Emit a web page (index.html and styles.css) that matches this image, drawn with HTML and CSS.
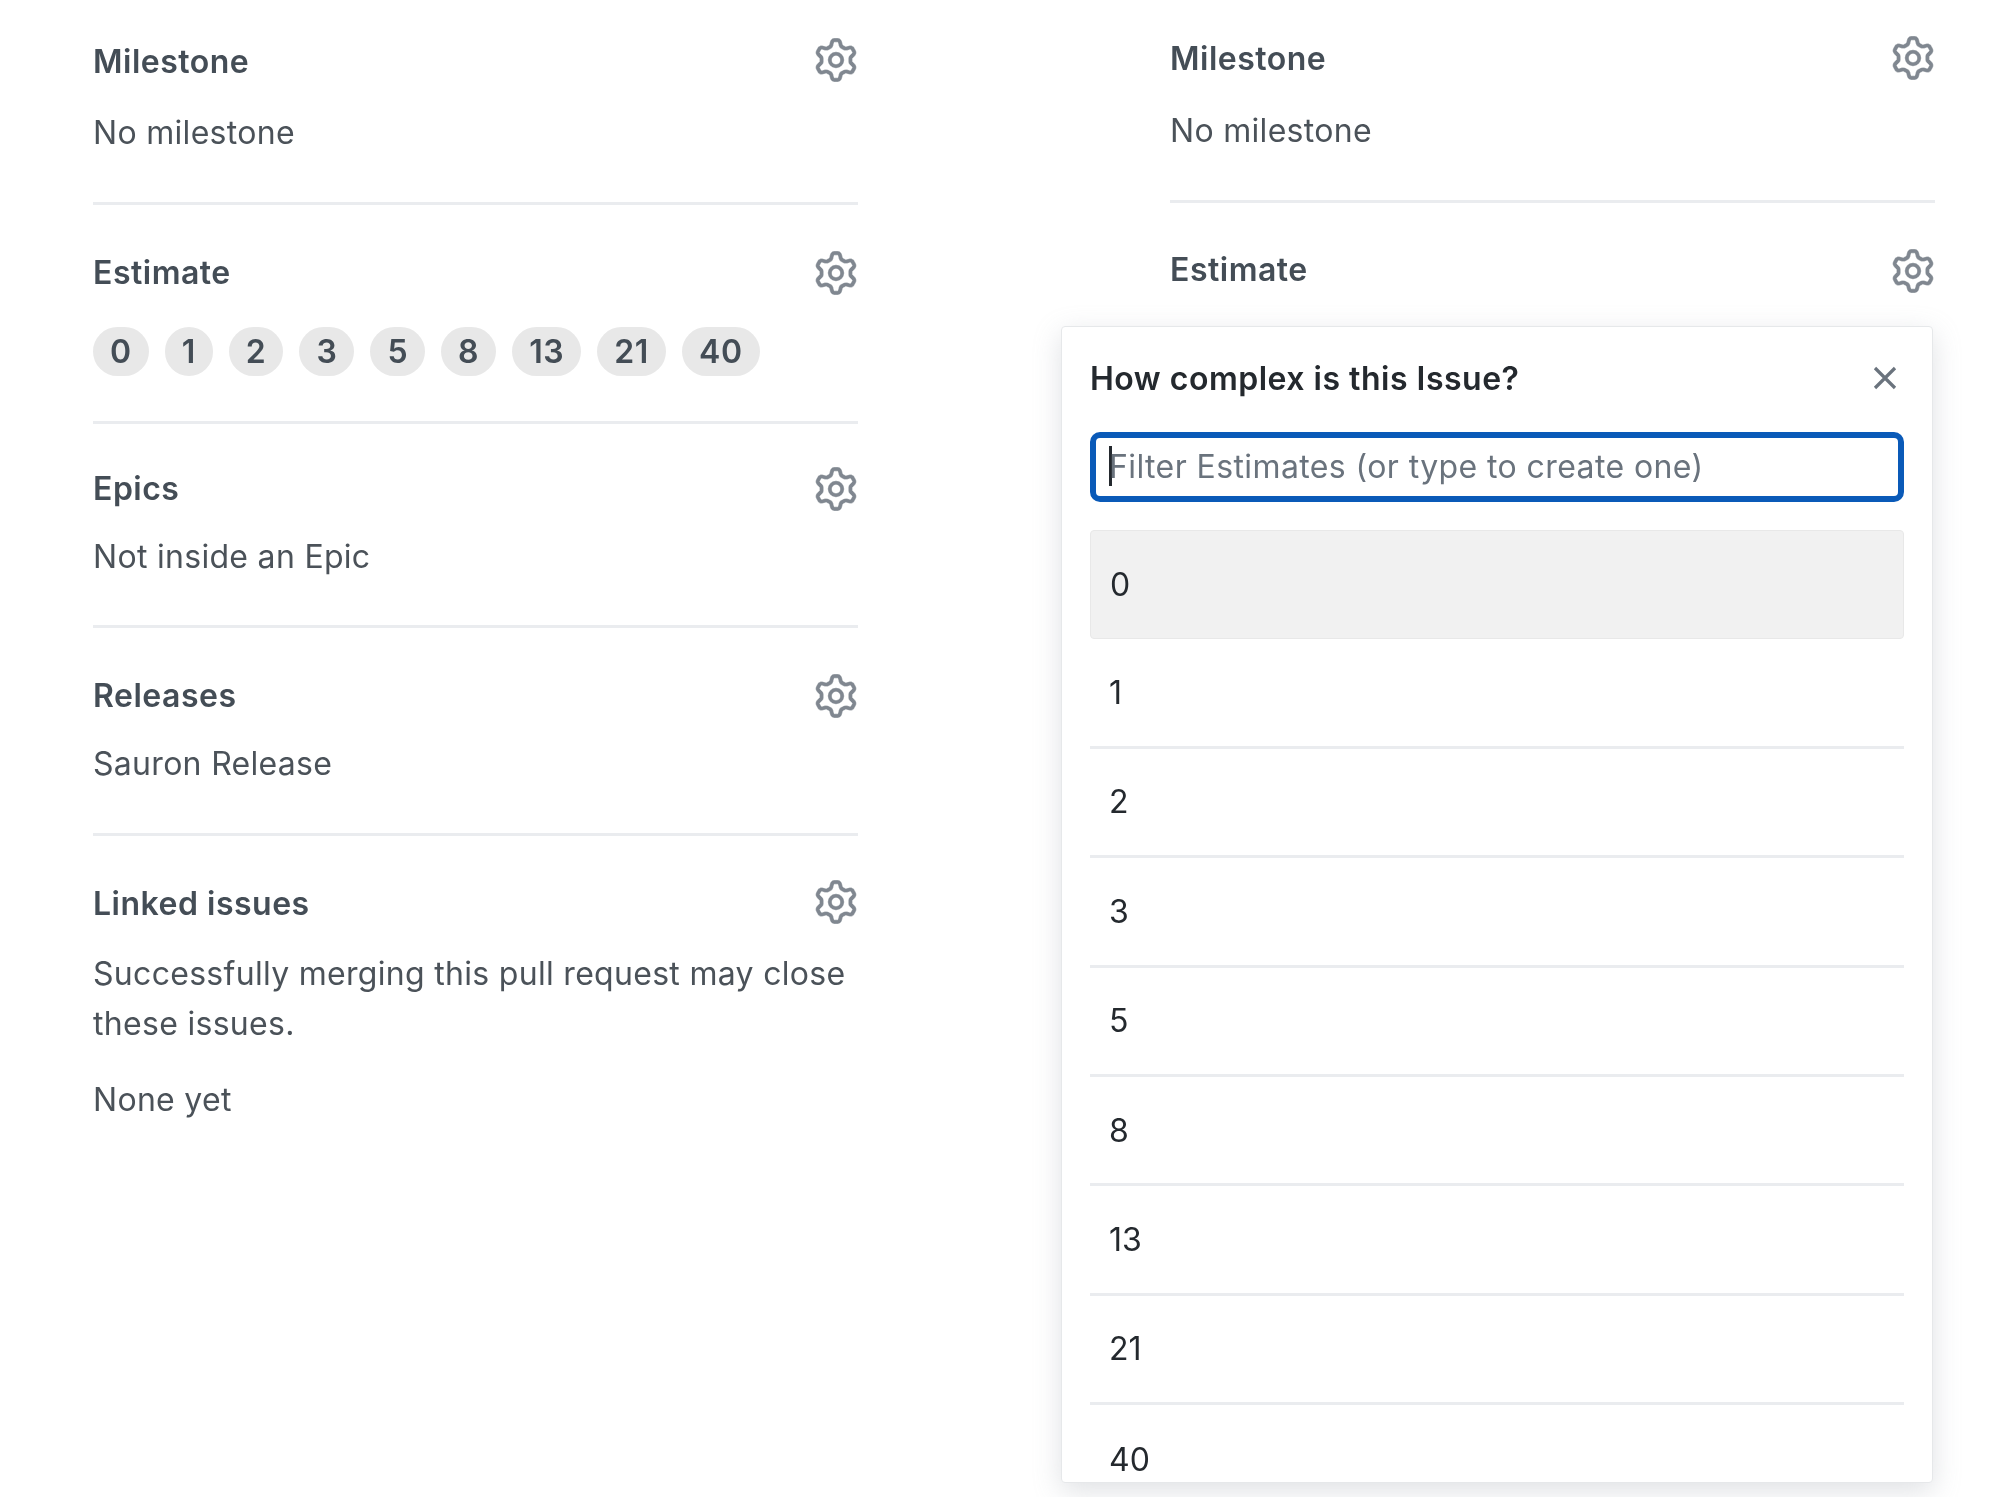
FILE: index.html
```html
<!DOCTYPE html>
<html lang="en">
<head>
<meta charset="utf-8">
<title>Sidebar</title>
<link rel="stylesheet" href="styles.css">
</head>
<body>
<svg class="defs" width="0" height="0" aria-hidden="true">
  <symbol id="gear" viewBox="0 0 16 16"><path d="M8 0a8.2 8.2 0 0 1 .701.031C9.444.095 9.99.645 10.16 1.29l.288 1.107c.018.066.079.158.212.224.231.114.454.243.668.386.123.082.233.09.299.071l1.103-.303c.644-.176 1.392.021 1.82.63.27.385.506.792.704 1.218.315.675.111 1.422-.364 1.891l-.814.806c-.049.048-.098.147-.088.294.016.257.016.515 0 .772-.01.147.038.246.088.294l.814.806c.475.469.679 1.216.364 1.891a7.977 7.977 0 0 1-.704 1.217c-.428.61-1.176.807-1.82.63l-1.102-.302c-.067-.019-.177-.011-.3.071a5.909 5.909 0 0 1-.668.386c-.133.066-.194.158-.211.224l-.29 1.106c-.168.646-.715 1.196-1.458 1.26a8.006 8.006 0 0 1-1.402 0c-.743-.064-1.289-.614-1.458-1.26l-.289-1.106c-.018-.066-.079-.158-.212-.224a5.738 5.738 0 0 1-.668-.386c-.123-.082-.233-.09-.299-.071l-1.103.303c-.644.176-1.392-.021-1.82-.63a8.12 8.12 0 0 1-.704-1.218c-.315-.675-.111-1.422.363-1.891l.815-.806c.05-.048.098-.147.088-.294a6.214 6.214 0 0 1 0-.772c.01-.147-.038-.246-.088-.294l-.815-.806C.635 6.045.431 5.298.746 4.623a7.92 7.92 0 0 1 .704-1.217c.428-.61 1.176-.807 1.82-.63l1.102.302c.067.019.177.011.3-.071.214-.143.437-.272.668-.386.133-.066.194-.158.211-.224l.29-1.106C6.009.645 6.556.095 7.299.03 7.53.01 7.764 0 8 0Zm-.571 1.525c-.036.003-.108.036-.137.146l-.289 1.105c-.147.561-.549.967-.998 1.189-.173.086-.34.183-.5.29-.417.278-.97.423-1.529.27l-1.103-.303c-.109-.03-.175.016-.195.045-.22.312-.412.644-.573.99-.014.031-.021.11.059.19l.815.806c.411.406.562.957.53 1.456a4.709 4.709 0 0 0 0 .582c.032.499-.119 1.05-.53 1.456l-.815.806c-.081.08-.073.159-.059.19.162.346.353.677.573.989.02.03.085.076.195.046l1.102-.303c.56-.153 1.113-.008 1.53.27.161.107.328.204.501.29.447.222.85.629.997 1.189l.289 1.105c.029.109.101.143.137.146a6.6 6.6 0 0 0 1.142 0c.036-.003.108-.036.137-.146l.289-1.105c.147-.561.549-.967.998-1.189.173-.086.34-.183.5-.29.417-.278.97-.423 1.529-.27l1.103.303c.109.029.175-.016.195-.045.22-.313.411-.644.573-.99.014-.031.021-.11-.059-.19l-.815-.806c-.411-.406-.562-.957-.53-1.456a4.709 4.709 0 0 0 0-.582c-.032-.499.119-1.05.53-1.456l.815-.806c.081-.08.073-.159.059-.19a6.464 6.464 0 0 0-.573-.989c-.02-.03-.085-.076-.195-.046l-1.102.303c-.56.153-1.113.008-1.53-.27a4.44 4.44 0 0 0-.501-.29c-.447-.222-.85-.629-.997-1.189l-.289-1.105c-.029-.11-.101-.143-.137-.146a6.6 6.6 0 0 0-1.142 0ZM11 8a3 3 0 1 1-6 0 3 3 0 0 1 6 0ZM9.5 8a1.5 1.5 0 1 0-3.001.001A1.5 1.5 0 0 0 9.5 8Z"/></symbol>
</svg>
<main class="page">
  <aside class="sidebar">
    <section class="section s-milestone">
      <header class="head"><h3>Milestone</h3><svg class="gear"><use href="#gear"/></svg></header>
      <p class="value">No milestone</p>
    </section>
    <section class="section s-estimate">
      <header class="head"><h3>Estimate</h3><svg class="gear"><use href="#gear"/></svg></header>
      <div class="pills">
        <span class="pill">0</span><span class="pill">1</span><span class="pill">2</span><span class="pill">3</span><span class="pill">5</span><span class="pill">8</span><span class="pill">13</span><span class="pill">21</span><span class="pill">40</span>
      </div>
    </section>
    <section class="section s-epics">
      <header class="head"><h3>Epics</h3><svg class="gear"><use href="#gear"/></svg></header>
      <p class="value">Not inside an Epic</p>
    </section>
    <section class="section s-releases">
      <header class="head"><h3>Releases</h3><svg class="gear"><use href="#gear"/></svg></header>
      <p class="value">Sauron Release</p>
    </section>
    <section class="section s-linked">
      <header class="head"><h3>Linked issues</h3><svg class="gear"><use href="#gear"/></svg></header>
      <p class="value">Successfully merging this pull request may close these issues.</p>
      <p class="value none">None yet</p>
    </section>
  </aside>
  <aside class="sidebar sidebar-right">
    <section class="section s-milestone">
      <header class="head"><h3>Milestone</h3><svg class="gear"><use href="#gear"/></svg></header>
      <p class="value">No milestone</p>
    </section>
    <section class="section s-estimate no-rule">
      <header class="head"><h3>Estimate</h3><svg class="gear"><use href="#gear"/></svg></header>
    </section>
  </aside>
  <div class="popover">
    <header class="pop-head">
      <h2>How complex is this Issue?</h2>
      <svg class="close" viewBox="0 0 24 24"><path d="M4 4 20 20M20 4 4 20"/></svg>
    </header>
    <div class="filter"><span class="caret"></span><span class="placeholder">Filter Estimates (or type to create one)</span></div>
    <ul class="options">
      <li class="option active">0</li>
      <li class="option">1</li>
      <li class="option">2</li>
      <li class="option">3</li>
      <li class="option">5</li>
      <li class="option">8</li>
      <li class="option">13</li>
      <li class="option">21</li>
      <li class="option">40</li>
    </ul>
  </div>
</main>
</body>
</html>
```
FILE: styles.css
```css
* { box-sizing: border-box; }
html, body { margin: 0; height: 100%; background: #fff; overflow: hidden; }
body { font-family: Inter, "Liberation Sans", sans-serif; color: #444d56; }
.defs { position: absolute; }
.page { position: relative; display: flex; height: 1497px; padding-left: 93px; filter: blur(.5px); }
.sidebar { width: 765px; flex: none; }
.sidebar-right { margin-left: 312px; margin-top: -2.5px; }
.section { border-bottom: 3px solid #eaecef; padding-bottom: 44px; }
.no-rule { border-bottom: 0; }
.head { display: flex; align-items: center; justify-content: space-between; height: 44px; }
h3 { margin: 0; font-size: 32px; font-weight: 600; letter-spacing: .5px; }
.gear { width: 44px; height: 44px; fill: #6a737d; stroke: #fff; stroke-width: .12; opacity: .85; margin-top: 2px; }
.s-milestone .gear, .s-linked .gear { margin-top: -2px; }
.value { margin: 0; font-size: 32px; line-height: 50px; letter-spacing: .3px; color: #4b5259; }
.s-milestone { padding-top: 39px; }
.s-milestone .value { margin-top: 25px; }
.s-estimate { padding-top: 45px; }
.s-epics { padding-top: 42px; padding-bottom: 43px; }
.s-epics .value { margin-top: 22px; }
.s-releases { padding-top: 45px; }
.s-releases .value { margin-top: 22px; }
.s-linked { padding-top: 45px; border-bottom: 0; }
.s-linked .value { margin-top: 24px; }
.s-linked .none { margin-top: 26px; }
.pills { display: flex; gap: 16px; margin-top: 33px; margin-bottom: 1px; }
.pill { height: 49px; min-width: 46px; padding: 0 17px; border-radius: 25px; background: #e8e8e8; display: flex; align-items: center; justify-content: center; font-size: 32px; font-weight: 600; letter-spacing: .6px; }
.popover { position: absolute; left: 1061px; top: 326px; width: 872px; height: 1157px; overflow: hidden; background: #fff; border: 1px solid #e6e8ea; border-radius: 4px; box-shadow: 0 8px 28px rgba(149,157,165,.3); padding: 0 28px; }
.pop-head { display: flex; align-items: center; justify-content: space-between; height: 105px; padding-bottom: 3px; }
h2 { margin: 0; font-size: 32px; font-weight: 600; letter-spacing: .5px; color: #24292e; }
.close { width: 30px; height: 30px; fill: none; stroke: #6a737d; stroke-width: 2.6; margin-right: 4px; }
.filter { display: flex; align-items: center; height: 70px; border: 6px solid #0a5ab8; border-radius: 10px; padding: 0 13px 2px; }
.caret { width: 3px; height: 40px; background: #24292e; flex: none; margin-right: -3px; }
.placeholder { font-size: 32px; letter-spacing: .4px; color: #6a737d; }
.options { list-style: none; margin: 28px 0 0; padding: 0; }
.option { height: 109.4px; display: flex; align-items: center; padding-left: 19px; font-size: 32px; color: #24292e; border-bottom: 3px solid #eaecef; }
.option.active { background: #f1f1f1; border: 1px solid #e8e8e8; border-radius: 4px; }
.option:last-child { border-bottom: 0; }
```
